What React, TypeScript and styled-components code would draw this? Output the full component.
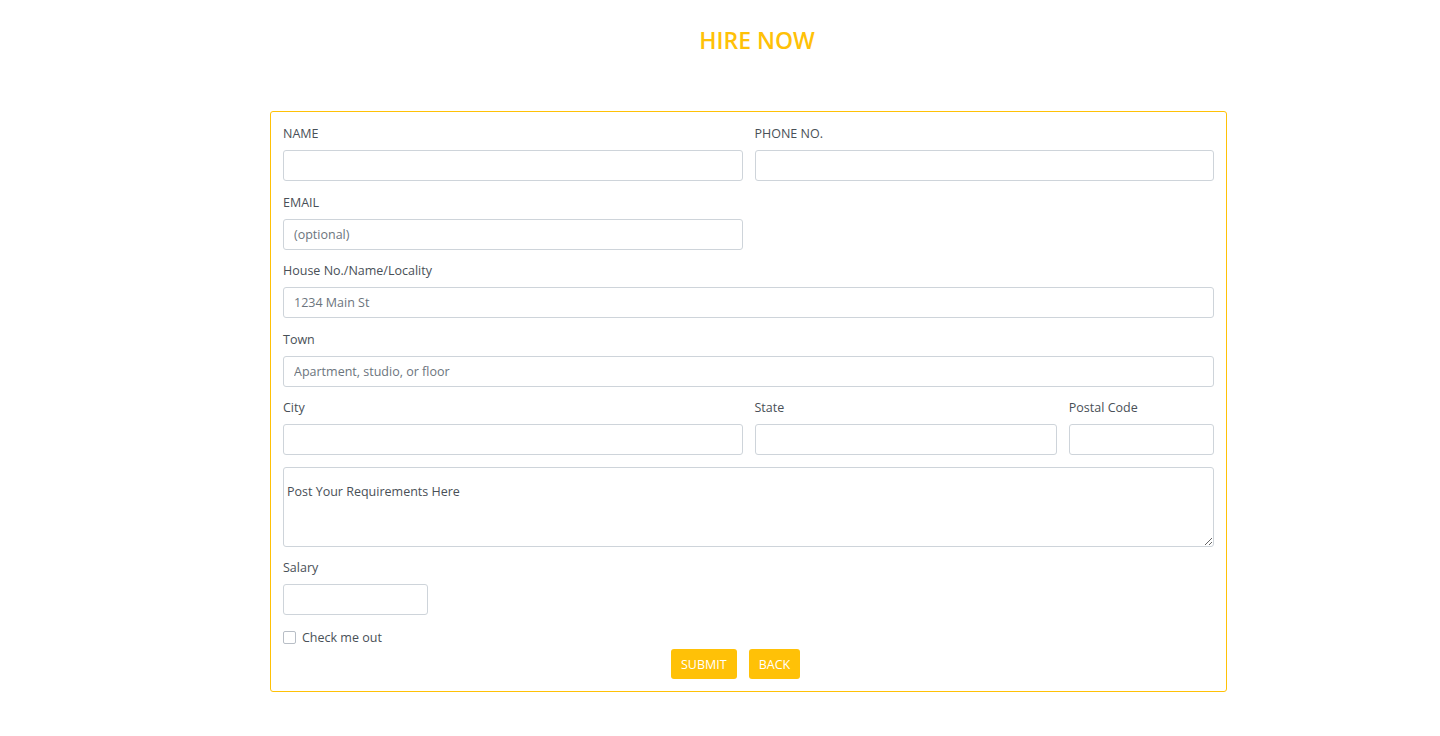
import React from "react";
import styled, { createGlobalStyle } from "styled-components";

const Global = createGlobalStyle`
  html, body { margin: 0; padding: 0; background: #fff; }
  body { font-family: "Open Sans", "Noto Sans", sans-serif; color: #495057; }
  * { box-sizing: border-box; }
`;

const Page = styled.div`
  width: 1440px;
  min-height: 736px;
  padding-top: 24px;
`;

const Title = styled.h2`
  margin: 0 0 55px 0;
  padding-left: 74px;
  text-align: center;
  font-size: 23px;
  font-weight: 600;
  line-height: 32px;
  color: #ffc107;
`;

const Card = styled.form`
  margin-left: 270px;
  width: 957px;
  border: 1px solid #ffc107;
  border-radius: 3px;
  padding: 12px 12px 12px 12px;
`;

const Grid = styled.div`
  display: grid;
  grid-template-columns: repeat(12, 1fr);
  column-gap: 12px;
  row-gap: 11.5px;
`;

const Field = styled.div<{ $span: number }>`
  grid-column: span ${(p) => p.$span};
  display: flex;
  flex-direction: column;
`;

const Label = styled.label`
  font-size: 12.5px;
  line-height: 20px;
  height: 20px;
  margin-bottom: 6px;
  color: #495057;
`;

const Input = styled.input`
  height: 31px;
  width: 100%;
  border: 1px solid #ced4da;
  border-radius: 3px;
  padding: 0 10px;
  font-family: inherit;
  font-size: 12.5px;
  color: #495057;
  background: #fff;
  outline: none;
  &::placeholder { color: #6c757d; opacity: 1; }
`;

const TextArea = styled.textarea`
  height: 80px;
  width: 100%;
  border: 1px solid #ced4da;
  border-radius: 3px;
  padding: 14px 3px;
  font-family: inherit;
  font-size: 12.5px;
  line-height: 20px;
  color: #495057;
  outline: none;
  &::placeholder { color: #495057; opacity: 1; }
`;

const CheckRow = styled.label`
  display: flex;
  align-items: center;
  gap: 6px;
  height: 20px;
  margin-top: 12px;
  font-size: 12.5px;
  color: #495057;
`;

const Box = styled.span`
  width: 13px;
  height: 13px;
  border: 1px solid #b8bec6;
  border-radius: 2px;
  background: #fff;
`;

const Buttons = styled.div`
  display: flex;
  gap: 12px;
  padding-left: 388px;
  margin-top: 2px;
`;

const Button = styled.button`
  height: 30px;
  padding: 0 10px;
  border: none;
  border-radius: 3px;
  background: #ffc107;
  color: #fff;
  font-family: inherit;
  font-size: 12.5px;
  cursor: pointer;
`;

export default function App() {
  return (
    <Page>
      <Global />
      <Title>HIRE NOW</Title>
      <Card onSubmit={(e) => e.preventDefault()}>
        <Grid>
          <Field $span={6}>
            <Label>NAME</Label>
            <Input />
          </Field>
          <Field $span={6}>
            <Label>PHONE NO.</Label>
            <Input />
          </Field>
          <Field $span={6}>
            <Label>EMAIL</Label>
            <Input placeholder="(optional)" />
          </Field>
          <Field $span={6} />
          <Field $span={12}>
            <Label>House No./Name/Locality</Label>
            <Input placeholder="1234 Main St" />
          </Field>
          <Field $span={12}>
            <Label>Town</Label>
            <Input placeholder="Apartment, studio, or floor" />
          </Field>
          <Field $span={6}>
            <Label>City</Label>
            <Input />
          </Field>
          <Field $span={4}>
            <Label>State</Label>
            <Input />
          </Field>
          <Field $span={2}>
            <Label>Postal Code</Label>
            <Input />
          </Field>
          <Field $span={12}>
            <TextArea placeholder="Post Your Requirements Here" />
          </Field>
          <Field $span={2}>
            <Label>Salary</Label>
            <Input />
          </Field>
        </Grid>
        <CheckRow>
          <Box />
          Check me out
        </CheckRow>
        <Buttons>
          <Button type="submit">SUBMIT</Button>
          <Button type="button">BACK</Button>
        </Buttons>
      </Card>
    </Page>
  );
}
